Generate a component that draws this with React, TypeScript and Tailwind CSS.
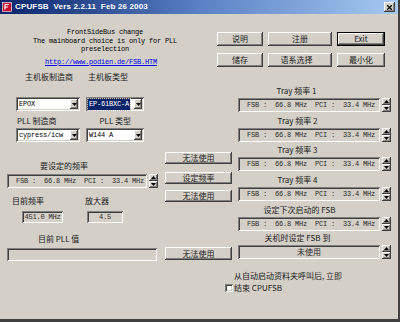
import React from "react";

const cjk = "font-['Noto_Sans_CJK_SC',sans-serif]";
const mono = "font-['Liberation_Mono',monospace]";
const raised =
  "shadow-[inset_-1px_-1px_#404040,inset_1px_1px_#ffffff,inset_-2px_-2px_#808080,inset_2px_2px_#d4d0c8]";
const sunken =
  "shadow-[inset_1px_1px_#808080,inset_-1px_-1px_#ffffff,inset_2px_2px_#404040,inset_-2px_-2px_#d4d0c8]";

const FSB = "FSB :  66.8 MHz  PCI :  33.4 MHz";

function Tri({ up }: { up?: boolean }) {
  return (
    <svg width="5" height="3" viewBox="0 0 5 3">
      <path d={up ? "M2.5 0 L5 3 L0 3 Z" : "M0 0 L5 0 L2.5 3 Z"} fill="#000" />
    </svg>
  );
}

function Btn({ label, className = "", def }: { label: string; className?: string; def?: boolean }) {
  return (
    <div className={`${def ? "border border-black" : ""} ${className}`}>
      <div className={`h-full w-full bg-[#d4d0c8] ${raised} flex items-center justify-center text-[8px] leading-none text-[#1a1a1a] ${cjk}`}>
        {label}
      </div>
    </div>
  );
}

function Spinner() {
  return (
    <div className="flex flex-col w-[9px] h-[14px] ml-[2px]">
      <div className={`flex-1 bg-[#d4d0c8] ${raised} flex items-center justify-center`}>
        <Tri up />
      </div>
      <div className={`flex-1 bg-[#d4d0c8] ${raised} flex items-center justify-center`}>
        <Tri />
      </div>
    </div>
  );
}

function FsbBox({ w = 142, text = FSB, center }: { w?: number; text?: string; center?: boolean }) {
  return (
    <div className="flex items-center">
      <div
        style={{ width: w }}
        className={`h-[14px] bg-[#d4d0c8] ${sunken} flex items-center ${center ? `justify-center text-[8px] ${cjk}` : `pl-[9px] text-[7px] tracking-[-0.2px] ${mono}`} whitespace-pre text-[#2a2a2a] leading-none`}
      >
        {text}
      </div>
      <Spinner />
    </div>
  );
}

function Combo({ w, text, selected }: { w: number; text: string; selected?: boolean }) {
  return (
    <div style={{ width: w }} className={`h-[14px] bg-white ${sunken} flex items-center pl-[2px] pr-[2px]`}>
      <div className="flex-1 flex items-center">
        <span
          className={`${mono} text-[7px] tracking-[-0.2px] leading-none whitespace-pre px-[1px] py-[2px] ${
            selected ? "bg-[#0a246a] text-white outline outline-1 outline-dotted outline-[#c0c0c0]" : "text-black"
          }`}
        >
          {text}
        </span>
      </div>
      <div className={`w-[8px] h-[10px] bg-[#d4d0c8] ${raised} flex items-center justify-center`}>
        <Tri />
      </div>
    </div>
  );
}

function Label({ children, className = "" }: { children: React.ReactNode; className?: string }) {
  return <div className={`${cjk} text-[8px] leading-[12px] h-[12px] text-[#1a1a1a] whitespace-pre ${className}`}>{children}</div>;
}

export default function App() {
  return (
    <div className="w-[400px] h-[322px] bg-[#d4d0c8] border-r-2 border-b-[3px] border-[#404040] overflow-hidden flex flex-col">
      {/* title bar */}
      <div className="h-[14px] bg-linear-to-r from-[#0a246a] via-[#5b80c4] to-[#a6caf0] flex items-center pl-[2px] pr-[3px]">
        <svg width="10" height="10" viewBox="0 0 10 10">
          <rect x="0.5" y="0.5" width="9" height="9" fill="#c8102e" stroke="#fff" strokeWidth="0.6" />
          <path d="M3 2.5 H7 M3 2.5 V7.5 M3 5 H6" stroke="#fff" strokeWidth="1.2" />
        </svg>
        <span className="ml-[3px] text-white font-bold text-[8px] leading-none font-['Liberation_Sans',sans-serif] whitespace-pre tracking-[0.15px]">
          CPUFSB  Vers 2.2.11  Feb 26 2003
        </span>
        <div className="flex-1" />
        <div className={`w-[11px] h-[10px] bg-[#d4d0c8] ${raised} flex items-center justify-center`}>
          <svg width="5" height="5" viewBox="0 0 5 5">
            <path d="M0 0 L5 5 M5 0 L0 5" stroke="#000" strokeWidth="1.3" />
          </svg>
        </div>
      </div>

      {/* top row */}
      <div className="flex h-[56px]">
        <div className={`w-[210px] pt-[14px] flex flex-col items-center ${mono} text-[7px] tracking-[-0.2px] text-black`}>
          <div className="leading-[8.5px]">FrontSideBus change</div>
          <div className="leading-[8.5px]">The mainboard choice is only for PLL</div>
          <div className="leading-[8.5px]">preselection</div>
          <div className="leading-[8px] mt-[4px] text-[#0000ee] underline pr-[8px]">http://www.podien.de/FSB.HTM</div>
        </div>
        <div className="pl-[7px] pt-[18px] flex flex-col gap-[7px]">
          <div className="flex gap-[5px]">
            <Btn label="说明" className="w-[46px] h-[14px]" />
            <Btn label="注册" className="w-[64px] h-[14px]" />
            <Btn label="Exit" def className="w-[48px] h-[14px] font-['Liberation_Sans']" />
          </div>
          <div className="flex gap-[5px]">
            <Btn label="储存" className="w-[46px] h-[14px]" />
            <Btn label="语系选择    " className="w-[64px] h-[14px] whitespace-pre" />
            <Btn label="最小化" className="w-[48px] h-[14px]" />
          </div>
        </div>
      </div>

      {/* main row */}
      <div className="flex">
        {/* left column */}
        <div className="w-[158px] pl-[7px] flex flex-col">
          <div className="flex mt-[1px]">
            <Label className="ml-[18px]">主机板制造商</Label>
            <Label className="ml-[15px]">主机板类型</Label>
          </div>
          <div className="flex mt-[14px] pl-[9px] gap-[6px]">
            <Combo w={64} text="EPOX" />
            <Combo w={58} text="EP-61BXC-A" selected />
          </div>
          <div className="flex mt-[4px]">
            <Label className="ml-[10px]">PLL 制造商</Label>
            <Label className="ml-[43px]">PLL 类型</Label>
          </div>
          <div className="flex mt-[1px] pl-[9px] gap-[6px]">
            <Combo w={64} text="cypress/icw" />
            <Combo w={58} text="W144 A" />
          </div>
          <Label className="mt-[18px] ml-[33px]">要设定的频率</Label>
          <div className="mt-[2px]">
            <FsbBox w={140} />
          </div>
          <div className="flex mt-[7px]">
            <Label className="ml-[5px]">目前频率</Label>
            <Label className="ml-[41px]">放大器</Label>
          </div>
          <div className="flex mt-[4px]">
            <div className={`ml-[15px] w-[41px] h-[12px] ${sunken} flex items-center justify-center ${mono} text-[7px] tracking-[-0.2px] leading-none text-[#2a2a2a]`}>
              451.0 MHz
            </div>
            <div className={`ml-[24px] w-[36px] h-[12px] ${sunken} flex items-center justify-center ${mono} text-[7px] tracking-[-0.2px] leading-none text-[#2a2a2a]`}>
              4.5
            </div>
          </div>
          <Label className="mt-[10px] ml-[31px]">目前 PLL 值</Label>
          <div className={`mt-[3px] w-[150px] h-[13px] ${sunken}`} />
        </div>

        {/* middle column */}
        <div className="w-[67px] ml-[7px] flex flex-col">
          <Btn label="无法使用" className="mt-[82px] h-[12px]" />
          <Btn label="设定频率" className="mt-[8px] h-[12px]" />
          <Btn label="无法使用" className="mt-[6px] h-[12px]" />
          <Btn label="无法使用" className="mt-[45px] h-[13px]" />
        </div>

        {/* right column */}
        <div className="ml-[6px] flex flex-col">
          <Label className="mt-[15px] text-center pr-[36px]">Tray 频率 1</Label>
          <div className="mt-[1px]"><FsbBox /></div>
          <Label className="mt-[3px] text-center pr-[34px]">Tray 频率 2</Label>
          <div className="mt-[1px]"><FsbBox /></div>
          <Label className="mt-[2px] text-center pr-[34px]">Tray 频率 3</Label>
          <div className="mt-[1px]"><FsbBox /></div>
          <Label className="mt-[3px] text-center pr-[34px]">Tray 频率 4</Label>
          <div className="mt-[1px]"><FsbBox /></div>
          <Label className="mt-[3px] text-center pr-[30px]">设定下次启动的 FSB</Label>
          <div className="mt-[1px]"><FsbBox /></div>
          <Label className="mt-[1px] text-center pr-[34px]">关机时设定 FSB 到</Label>
          <div className="mt-[1px]"><FsbBox text="未使用" center /></div>
        </div>
      </div>

      {/* autostart checkbox */}
      <div className="flex items-end pl-[225px] mt-[9px]">
        <div className={`w-[8px] h-[8px] bg-white ${sunken} mb-[2px]`} />
        <div className="ml-[1px]">
          <Label>从自动启动资料夹呼叫后, 立即</Label>
          <Label>结束 CPUFSB</Label>
        </div>
      </div>
    </div>
  );
}
